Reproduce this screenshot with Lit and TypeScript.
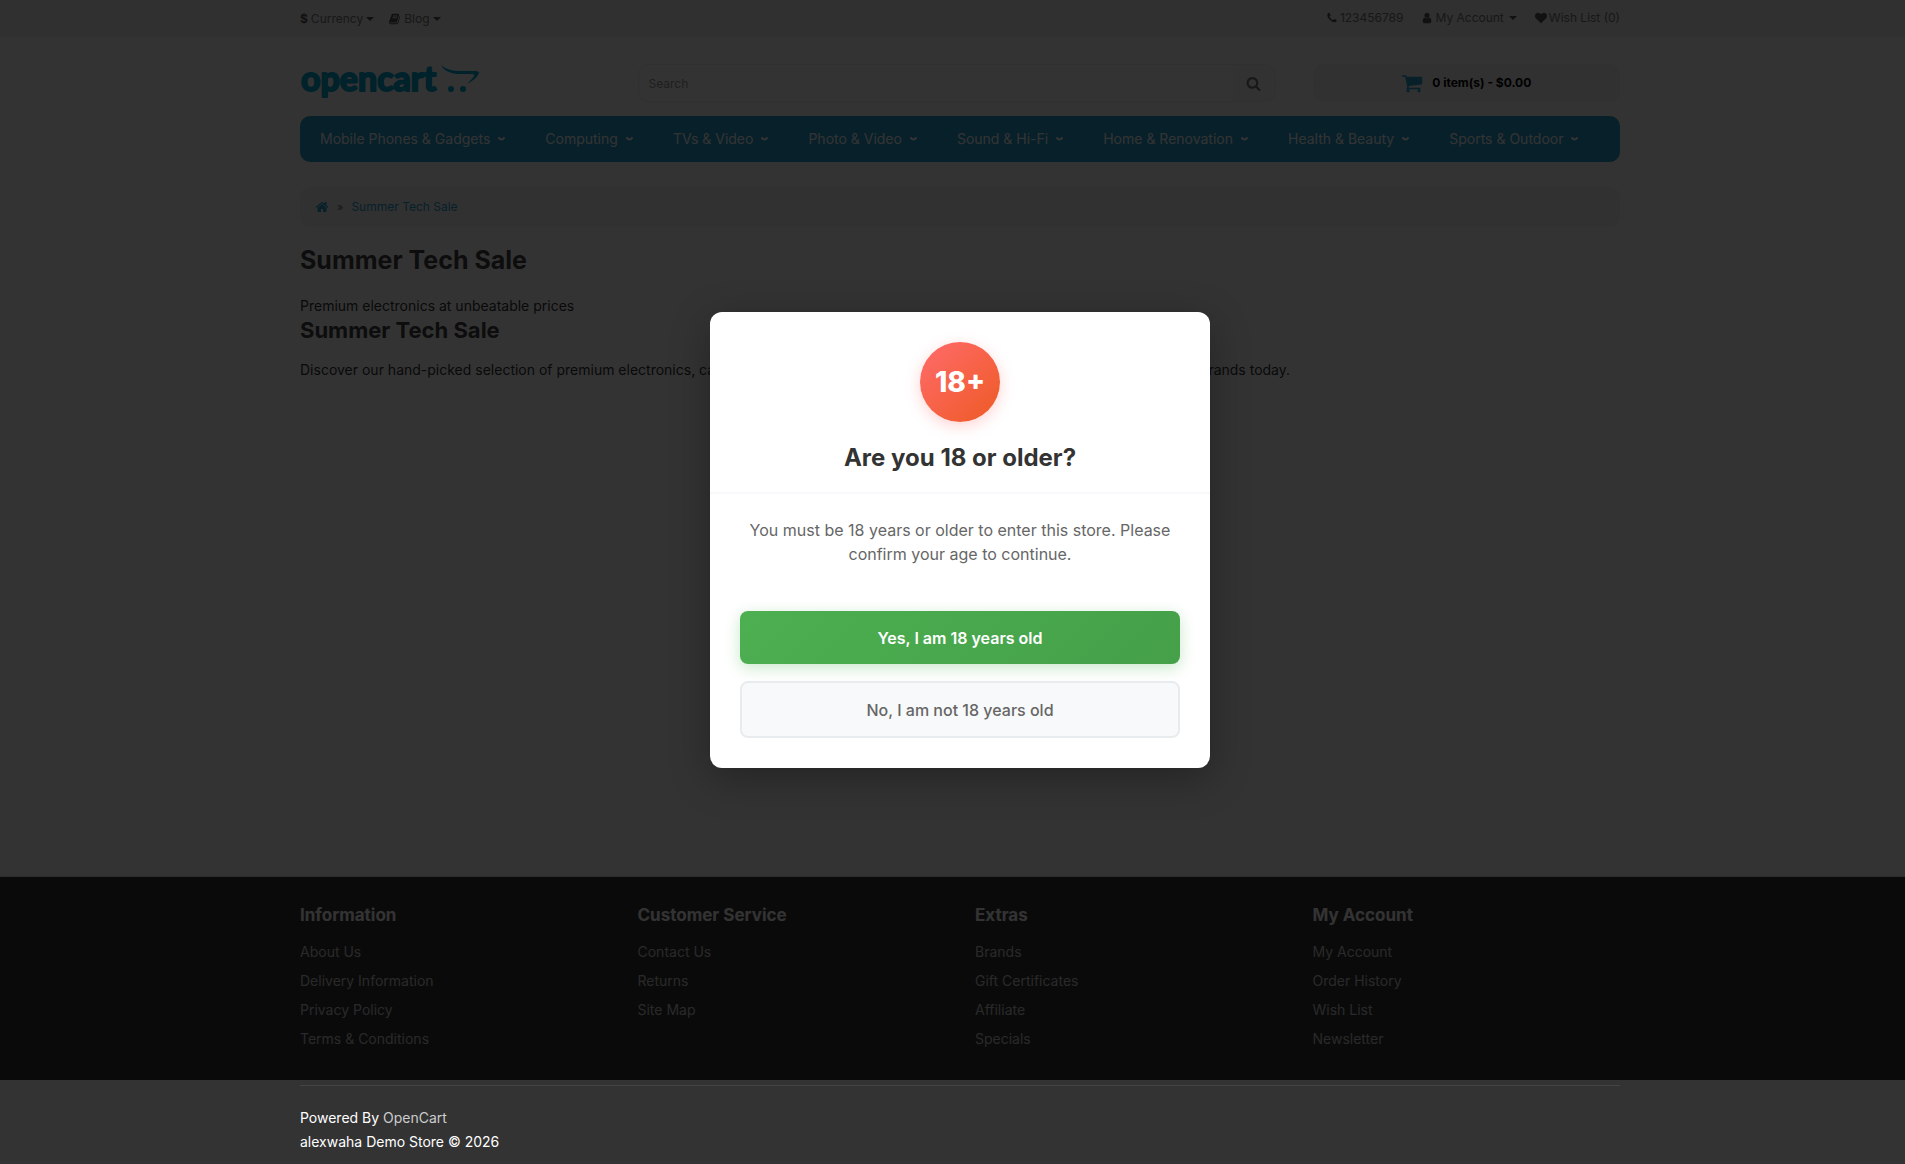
import { LitElement, html, css, svg } from "lit";
import { customElement } from "lit/decorators.js";

const ICONS: Record<string, string> = {
  book: "M1639 478q40 57 18 129l-275 906q-19 64-76.5 107.5t-122.5 43.5h-923q-77 0-148.5-53.5t-99.5-131.5q-24-67-2-127 0-4 3-27t4-37q1-8-3-21.5t-3-19.5q2-11 8-21t16.5-23.5 16.5-23.5q23-38 45-91.5t30-91.5q3-10 .5-30t-.5-28q3-11 17-28t17-23q21-36 42-92t25-90q1-9-2.5-32t.5-28q4-13 22-30.5t22-22.5q19-26 42.5-84.5t27.5-96.5q1-8-3-25.5t-2-26.5q2-8 9-18t18-23 17-21q8-12 16.5-30.5t15-35 16-36 19.5-32 26.5-23.5 36-11.5 47.5 5.5l-1 3q38-9 51-9h761q74 0 114 56t18 130l-274 906q-36 119-71.5 153.5t-128.5 34.5h-869q-27 0-38 15-11 16-1 43 24 70 144 70h923q29 0 56-15.5t35-41.5l300-987q7-22 5-57 38 15 59 43zm-1064 2q-4 13 2 22.5t20 9.5h608q13 0 25.5-9.5t16.5-22.5l21-64q4-13-2-22.5t-20-9.5h-608q-13 0-25.5 9.5t-16.5 22.5zm-83 256q-4 13 2 22.5t20 9.5h608q13 0 25.5-9.5t16.5-22.5l21-64q4-13-2-22.5t-20-9.5h-608q-13 0-25.5 9.5t-16.5 22.5z",
  phone: "M1600 1240q0 27-10 70.5t-21 68.5q-21 50-122 106-94 51-186 51-27 0-53-3.5t-57.5-12.5-47-14.5-55.5-20.5-49-18q-98-35-175-83-127-79-264-216t-216-264q-48-77-83-175-3-9-18-49t-20.5-55.5-14.5-47-12.5-57.5-3.5-53q0-92 51-186 56-101 106-122 25-11 68.5-21t70.5-10q14 0 21 3 18 6 53 76 11 19 30 54t35 63.5 31 53.5q3 4 17.5 25t21.5 35.5 7 28.5q0 20-28.5 50t-62 55-62 53-28.5 46q0 9 5 22.5t8.5 20.5 14 24 11.5 19q76 137 174 235t235 174q2 1 19 11.5t24 14 20.5 8.5 22.5 5q18 0 46-28.5t53-62 55-62 50-28.5q14 0 28.5 7t35.5 21.5 25 17.5q25 15 53.5 31t63.5 35 54 30q70 35 76 53 3 7 3 21z",
  user: "M1536 1399q0 109-62.5 187t-150.5 78h-854q-88 0-150.5-78t-62.5-187q0-85 8.5-160.5t31.5-152 58.5-131 94-89 134.5-34.5q131 128 313 128t313-128q76 0 134.5 34.5t94 89 58.5 131 31.5 152 8.5 160.5zm-256-887q0 159-112.5 271.5t-271.5 112.5-271.5-112.5-112.5-271.5 112.5-271.5 271.5-112.5 271.5 112.5 112.5 271.5z",
  heart: "M896 1664q-26 0-44-18l-624-602q-10-8-27.5-26t-55.5-65.5-68-97.5-53.5-121-23.5-138q0-220 127-344t351-124q62 0 126.5 21.5t120 58 95.5 68.5 76 68q36-36 76-68t95.5-68.5 120-58 126.5-21.5q224 0 351 124t127 344q0 221-229 450l-623 600q-18 18-44 18z",
  search: "M1216 832q0-185-131.5-316.5t-316.5-131.5-316.5 131.5-131.5 316.5 131.5 316.5 316.5 131.5 316.5-131.5 131.5-316.5zm512 832q0 52-38 90t-90 38q-54 0-90-38l-343-342q-179 124-399 124-143 0-273.5-55.5t-225-150-150-225-55.5-273.5 55.5-273.5 150-225 225-150 273.5-55.5 273.5 55.5 225 150 150 225 55.5 273.5q0 220-124 399l343 343q37 37 37 90z",
  cart: "M704 1536q0 52-38 90t-90 38-90-38-38-90 38-90 90-38 90 38 38 90zm896 0q0 52-38 90t-90 38-90-38-38-90 38-90 90-38 90 38 38 90zm128-1088v512q0 24-16.5 42.5t-40.5 21.5l-1044 122q13 60 13 70 0 16-24 64h920q26 0 45 19t19 45-19 45-45 19h-1024q-26 0-45-19t-19-45q0-11 8-31.5t16-36 21.5-40 15.5-29.5l-177-823h-204q-26 0-45-19t-19-45 19-45 45-19h256q16 0 28.5 6.5t19.5 15.5 13 24.5 8 26 5.5 29.5 4.5 26h1201q26 0 45 19t19 45z",
  home: "M1472 992v480q0 26-19 45t-45 19h-384v-384h-256v384h-384q-26 0-45-19t-19-45v-480q0-1 .5-3t.5-3l575-474 575 474q1 2 1 6zm223-69l-62 74q-8 9-21 11h-3q-13 0-21-7l-692-577-692 577q-12 8-24 7-13-2-21-11l-62-74q-8-10-7-23.5t11-21.5l719-599q32-26 76-26t76 26l244 204v-195q0-14 9-23t23-9h192q14 0 23 9t9 23v408l219 182q10 8 11 21.5t-7 23.5z",
};

const icon = (name: string, size = "") =>
  html`<svg class="icon ${size}" viewBox="0 0 1792 1792" aria-hidden="true">${svg`<path d=${ICONS[name]} />`}</svg>`;

const caret = html`<svg class="caret" viewBox="0 0 8 4" aria-hidden="true"><path d="M0 0h8l-4 4z" /></svg>`;
const chevron = html`<svg class="chevron" viewBox="0 0 7 6" aria-hidden="true"><path d="M.4 1.4Q2 3.6 3.5 3.6T6.6 1.4" /></svg>`;

const CATEGORIES = [
  "Mobile Phones & Gadgets",
  "Computing",
  "TVs & Video",
  "Photo & Video",
  "Sound & Hi-Fi",
  "Home & Renovation",
  "Health & Beauty",
  "Sports & Outdoor",
];

const FOOTER = [
  { title: "Information", links: ["About Us", "Delivery Information", "Privacy Policy", "Terms & Conditions"] },
  { title: "Customer Service", links: ["Contact Us", "Returns", "Site Map"] },
  { title: "Extras", links: ["Brands", "Gift Certificates", "Affiliate", "Specials"] },
  { title: "My Account", links: ["My Account", "Order History", "Wish List", "Newsletter"] },
];

@customElement("age-gate")
export class AgeGate extends LitElement {
  static styles = css`
    :host {
      position: absolute;
      inset: 0;
      display: flex;
      align-items: center;
      justify-content: center;
      background: rgba(0, 0, 0, 0.8);
    }
    .dialog {
      box-sizing: border-box;
      width: 100%;
      max-width: 500px;
      border-radius: 12px;
      background: #fff;
      box-shadow: 0 10px 40px rgba(0, 0, 0, 0.3);
      text-align: center;
    }
    .head {
      padding: 30px 30px 18px;
      border-bottom: 2px solid #f8f9fa;
    }
    .badge {
      display: flex;
      align-items: center;
      justify-content: center;
      width: 80px;
      height: 80px;
      margin: 0 auto 20px;
      border-radius: 50%;
      background: linear-gradient(135deg, #ff6b6b, #ee5a24);
      box-shadow: 0 4px 15px rgba(255, 107, 107, 0.3);
      color: #fff;
      font-size: 28px;
      font-weight: 800;
    }
    h2 {
      margin: 0;
      color: #333;
      font-size: 24px;
      line-height: 32px;
      font-weight: 700;
    }
    p {
      margin: 0;
      padding: 24px 30px 20px;
      color: #666;
      font-size: 16px;
      line-height: 24px;
    }
    .actions {
      display: flex;
      flex-direction: column;
      gap: 17px;
      padding: 25px 30px 30px;
    }
    button {
      padding: 0 20px;
      border: 0;
      border-radius: 8px;
      font: 600 16px/24px Inter, sans-serif;
      cursor: pointer;
    }
    .yes {
      height: 53px;
      background: linear-gradient(135deg, #4caf50, #45a049);
      box-shadow: 0 4px 15px rgba(76, 175, 80, 0.3);
      color: #fff;
    }
    .no {
      height: 57px;
      border: 2px solid #e9ecef;
      background: #f8f9fa;
      color: #666;
      font-weight: 500;
    }
  `;

  render() {
    return html`
      <section class="dialog" role="dialog" aria-modal="true" aria-labelledby="question">
        <div class="head">
          <div class="badge">18+</div>
          <h2 id="question">Are you 18 or older?</h2>
        </div>
        <p>You must be 18 years or older to enter this store. Please confirm your age to continue.</p>
        <div class="actions">
          <button class="yes" type="button">Yes, I am 18 years old</button>
          <button class="no" type="button">No, I am not 18 years old</button>
        </div>
      </section>
    `;
  }
}

@customElement("app-root")
export class AppRoot extends LitElement {
  static styles = css`
    :host {
      display: block;
      overflow: clip;
      color: #000;
      font: 14px/24px Inter, sans-serif;
    }
    *,
    *::before {
      box-sizing: border-box;
    }
    a {
      color: inherit;
      text-decoration: none;
    }
    ul {
      margin: 0;
      padding: 0;
      list-style: none;
    }
    button {
      border: 0;
      padding: 0;
      background: none;
      color: inherit;
      font: inherit;
      cursor: pointer;
    }
    .page {
      display: flex;
      flex-direction: column;
      min-height: 100vh;
      margin-right: -15px;
      background: #fff;
    }
    .stage {
      position: relative;
      flex: 1;
      display: flex;
      flex-direction: column;
    }
    .container {
      width: 100%;
      max-width: 1350px;
      margin: 0 auto;
      padding: 0 15px;
    }
    .icon {
      width: 12px;
      height: 12px;
      fill: currentColor;
      flex: none;
    }
    .icon.small { width: 14px; height: 14px; }
    .icon.medium { width: 15px; height: 15px; }
    .icon.large { width: 22px; height: 22px; }
    .caret {
      width: 8px;
      height: 4px;
      fill: currentColor;
      flex: none;
    }
    .chevron {
      width: 7px;
      height: 6px;
      fill: none;
      stroke: currentColor;
      stroke-width: 2;
      flex: none;
    }
    .top {
      background: #eee;
      border-bottom: 1px solid #f2f2f2;
      color: #777;
      font-size: 12px;
      line-height: 18px;
    }
    .top .container {
      display: flex;
      justify-content: space-between;
      height: 37px;
    }
    .left {
      display: flex;
      gap: 15px;
      padding-top: 10px;
      height: 28px;
    }
    .right {
      display: flex;
      gap: 18px;
      padding-top: 9px;
      height: 27px;
    }
    .entry {
      display: flex;
      align-items: center;
      gap: 3px;
    }
    .right .entry {
      gap: 2px;
    }
    .entry .icon,
    .entry .caret,
    .entry strong {
      color: #555;
    }
    .right .caret {
      margin-left: 3px;
    }
    .brand {
      display: grid;
      grid-template-columns: repeat(12, 1fr);
      column-gap: 30px;
      padding-top: 26px;
      padding-bottom: 14px;
    }
    .home {
      grid-column: span 3;
    }
    .logo {
      display: block;
      width: 180px;
      height: 38px;
      overflow: visible;
      fill: #00a8d8;
      color: #00a8d8;
    }
    .logo text {
      font: 700 34px/38px Lato, sans-serif;
      stroke: currentColor;
      stroke-width: 2;
      stroke-linejoin: round;
    }
    .search {
      grid-column: 4 / span 6;
      display: flex;
      height: 38px;
      margin-right: 7px;
      overflow: hidden;
      border: 1px solid #eee;
      border-radius: 10px;
    }
    .search input {
      flex: 1;
      min-width: 0;
      border: 0;
      padding: 0 10px;
      background: none;
      font: 12px Inter, sans-serif;
      outline: none;
    }
    .search input::placeholder {
      color: #999;
      opacity: 1;
    }
    .search button {
      display: flex;
      align-items: center;
      justify-content: center;
      width: 42px;
      background: #f8f8f8;
      color: #777;
    }
    .cart {
      grid-column: span 3;
      display: flex;
      align-items: center;
      justify-content: center;
      gap: 9px;
      height: 38px;
      border-radius: 10px;
      background: #f4f4f4;
      font-size: 12px;
      font-weight: 700;
    }
    .cart .icon {
      color: #23a1d1;
    }
    .menu {
      display: flex;
      height: 46px;
      border-radius: 10px;
      background: #23a1d1;
      color: #fff;
    }
    .menu a {
      display: flex;
      align-items: center;
      gap: 8px;
      padding: 0 20px;
    }
    .crumbs {
      display: flex;
      align-items: center;
      gap: 8px;
      height: 40px;
      margin: 25px 0 18px;
      padding: 0 15px;
      border-radius: 10px;
      background: #f5f5f5;
      color: #23a1d1;
      font-size: 12px;
    }
    .crumbs a {
      display: flex;
      align-items: center;
    }
    .crumbs .divider {
      color: #777;
      font-size: 11px;
    }
    main {
      flex: 1;
    }
    h1, h2, h3, p {
      margin: 0;
    }
    main p {
      color: #333;
    }
    h1, h2 {
      color: #444;
      font-weight: 700;
    }
    h1 {
      margin-bottom: 19px;
      font-size: 25px;
      line-height: 30px;
    }
    h2 {
      margin-bottom: 16px;
      font-size: 22px;
      line-height: 24px;
    }
    .links {
      padding: 24px 0 24px;
      border-top: 1px solid #ddd;
      background: #333;
      color: #ccc;
      font-size: 14px;
    }
    .links .container {
      display: grid;
      grid-template-columns: repeat(4, 1fr);
      column-gap: 30px;
    }
    .links h3 {
      margin-bottom: 11px;
      color: #fff;
      font-size: 17px;
      line-height: 28px;
      font-weight: 700;
    }
    .links li {
      height: 29px;
    }
    .powered {
      background: #333;
      color: #fff;
    }
    .powered hr {
      margin: 0 0 20px;
      border: 0;
      border-top: 1px solid #444;
    }
    .powered .container {
      padding-top: 5px;
      padding-bottom: 10px;
    }
    .powered a {
      color: #ccc;
    }
  `;

  render() {
    return html`
      <div class="page">
        <div class="stage">
          <nav class="top">
            <div class="container">
              <div class="left">
                <button class="entry" type="button"><strong>$</strong> Currency ${caret}</button>
                <button class="entry" type="button">${icon("book")} Blog ${caret}</button>
              </div>
              <div class="right">
                <a class="entry" href="#">${icon("phone")} 123456789</a>
                <a class="entry" href="#">${icon("user")} My Account ${caret}</a>
                <a class="entry" href="#">${icon("heart")} Wish List (0)</a>
              </div>
            </div>
          </nav>
          <header class="container brand">
            <a class="home" href="#" aria-label="opencart">
              <svg class="logo" viewBox="0 0 180 38">
                <text x="1" y="27">opencart</text>
                <path d="M141 1Q148 7 160 7L175 7Q181 7 178 11Q176 15 167 20Q173 14 174 12Q175 10 171 10L157 10Q145 9 141 1z" />
                <circle cx="151" cy="25" r="3" />
                <circle cx="163" cy="25" r="3" />
              </svg>
            </a>
            <form class="search" role="search">
              <input type="text" aria-label="Search" placeholder="Search" />
              <button type="button" aria-label="Search">${icon("search", "medium")}</button>
            </form>
            <button class="cart" type="button">${icon("cart", "large")} 0 item(s) - $0.00</button>
          </header>
          <main class="container">
            <nav class="menu">
              ${CATEGORIES.map((name) => html`<a href="#">${name} ${chevron}</a>`)}
            </nav>
            <nav class="crumbs">
              <a href="#" aria-label="Home">${icon("home", "small")}</a>
              <span class="divider">»</span>
              <a href="#">Summer Tech Sale</a>
            </nav>
            <h1>Summer Tech Sale</h1>
            <p>Premium electronics at unbeatable prices</p>
            <h2>Summer Tech Sale</h2>
            <p>
              Discover our hand-picked selection of premium electronics, carefully chosen for quality, performance and
              excellent value. Shop the top brands today.
            </p>
          </main>
          <footer class="links">
            <div class="container">
              ${FOOTER.map(
                (group) => html`<section>
                  <h3>${group.title}</h3>
                  <ul>
                    ${group.links.map((link) => html`<li><a href="#">${link}</a></li>`)}
                  </ul>
                </section>`
              )}
            </div>
          </footer>
          <age-gate></age-gate>
        </div>
        <div class="powered">
          <div class="container">
            <hr />
            <p>Powered By <a href="#">OpenCart</a></p>
            <p>alexwaha Demo Store © 2026</p>
          </div>
        </div>
      </div>
    `;
  }
}
